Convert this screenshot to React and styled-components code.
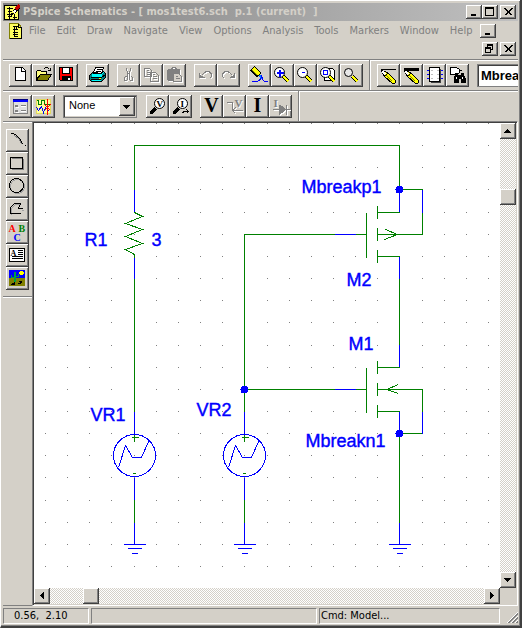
import React from "react";
import styled, { createGlobalStyle, css } from "styled-components";

const FACE = "#d4d0c8";
const GREEN = "#008000";
const BLUE = "#0000ff";
const UI_FONT = '"DejaVu Sans Condensed", "DejaVu Sans", sans-serif';

const GlobalStyle = createGlobalStyle`
  *, *::before, *::after { box-sizing: border-box; }
  body { margin: 0; background: ${FACE}; font: 11px/14px ${UI_FONT}; color: #000; }
  button, input, select { font: inherit; color: inherit; margin: 0; border-radius: 0; }
  svg { display: block; flex: none; }
`;

const raised = css`
  border: 0;
  padding: 0;
  background: ${FACE};
  box-shadow: inset -1px -1px #404040, inset 1px 1px #fff, inset -2px -2px #808080;
`;

const Window = styled.div`
  display: flex;
  flex-direction: column;
  min-height: 100vh;
  padding: 3px 2px 0 2px;
  overflow: hidden;
  background: ${FACE};
  border-left: 1px solid #fff;
  border-right: 2px solid #404040;
  border-bottom: 2px solid #404040;
  box-shadow: inset 0 1px #fff, inset -1px -1px #808080;
`;

const TitleBar = styled.header`
  display: flex;
  align-items: center;
  height: 18px;
  padding: 0 2px 0 1px;
  background: linear-gradient(90deg, #808080, #c0c0c0);
`;

const Title = styled.h1`
  flex: 1;
  min-width: 0;
  margin: 0 0 0 3px;
  overflow: hidden;
  white-space: pre;
  font: bold 11px/16px ${UI_FONT};
  color: ${FACE};
`;

const CaptionButton = styled.button`
  ${raised}
  display: block;
  width: 16px;
  height: 14px;
  margin-left: ${(p) => (p.$apart ? "2px" : "0")};
`;

const MenuBar = styled.nav`
  display: flex;
  align-items: center;
  gap: 1px;
  height: 19px;
  padding-left: 6px;
`;

const MenuItem = styled.button`
  border: 0;
  padding: 0 5px;
  background: none;
  color: #808080;
  line-height: 16px;
`;

const ChildControls = styled.div`
  display: flex;
  justify-content: flex-end;
  height: 19px;
  padding: 2px 2px 0;
`;

const Toolbar = styled.div`
  display: flex;
  overflow: hidden;
  border-top: 1px solid #808080;
  box-shadow: inset 0 1px #fff;
  padding: 4px 0 3px 6px;
  gap: 8px;
`;

const ButtonGroup = styled.div`
  display: flex;
  flex: none;
`;

const Divider = styled.div`
  flex: none;
  width: 2px;
  margin: -4px -2px -3px -2px;
  border-left: 1px solid #808080;
  background: #fff;
`;

const ToolButton = styled.button`
  ${raised}
  flex: none;
  display: flex;
  justify-content: center;
  width: 23px;
  height: 23px;
  font: bold 20px/21px "Liberation Serif", serif;
`;

const PartInput = styled.input`
  flex: none;
  width: 120px;
  height: 23px;
  padding: 0 3px;
  background: #fff;
  border: 1px solid #808080;
  box-shadow: inset 1px 1px #404040;
  && { font: bold 13px/18px "Liberation Sans", sans-serif; }
`;

const SelectBox = styled.div`
  position: relative;
  flex: none;
  width: 74px;
  height: 23px;
  margin-right: 1px;
`;

const Select = styled.select`
  appearance: none;
  width: 100%;
  height: 100%;
  padding: 0 18px 3px 5px;
  background: #fff;
  border: 1px solid #808080;
  outline: 0;
  box-shadow: inset 1px 1px #404040, inset -1px -1px ${FACE};
  && { font: 11px/14px "Liberation Sans", sans-serif; }
`;

const SelectArrow = styled.span`
  ${raised}
  position: absolute;
  top: 2px;
  right: 2px;
  bottom: 2px;
  width: 16px;
  display: flex;
  align-items: center;
  pointer-events: none;
`;

const Workspace = styled.main`
  flex: 1;
  display: flex;
  min-height: 0;
`;

const SidePanel = styled.aside`
  flex: none;
  width: 29px;
  border-top: 1px solid #808080;
  border-bottom: 1px solid #808080;
  box-shadow: inset 0 1px #fff;
`;

const Palette = styled.div`
  display: flex;
  flex-direction: column;
  padding: 7px 3px 6px;
  border-bottom: 1px solid #808080;
  box-shadow: 0 1px #fff;
`;

const Document = styled.section`
  flex: 1;
  min-width: 0;
  display: grid;
  grid-template-columns: minmax(0, 1fr) 16px;
  grid-template-rows: minmax(0, 1fr) 16px;
  padding: 1px;
  border-style: solid;
  border-width: 1px;
  border-color: #808080 #fff #fff #808080;
  box-shadow: inset 1px 1px #404040;
`;

const Sheet = styled.div`
  overflow: hidden;
  background: #fff;
`;

const ScrollTrack = styled.div`
  display: flex;
  flex-direction: ${(p) => (p.$vertical ? "column" : "row")};
  background: repeating-conic-gradient(#fff 0 25%, ${FACE} 0 50%) 0 0 / 2px 2px;
`;

const ScrollButton = styled.button`
  ${raised}
  flex: none;
  width: 16px;
  height: 16px;
`;

const ScrollRun = styled.div`
  flex: 1;
  padding: ${(p) => (p.$vertical ? "50px 0 0" : "0 0 0 33px")};
`;

const ScrollThumb = styled.div`
  ${raised}
  width: 16px;
  height: 16px;
`;

const StatusBar = styled.footer`
  display: flex;
  gap: 2px;
  padding: 2px 0;
`;

const StatusPane = styled.div`
  flex: ${(p) => (p.$width ? `0 0 ${p.$width}px` : "1")};
  height: 16px;
  padding-left: ${(p) => (p.$indent ? "10px" : "1px")};
  border: 1px solid;
  border-color: #808080 #fff #fff #808080;
  white-space: pre;
`;

const Grip = styled.div`
  flex: none;
  display: flex;
  justify-content: flex-end;
  align-items: flex-end;
  width: 16px;
`;

/* Integer coordinates fall on pixel centres. */
function Icon({ w = 23, h = 23, children }) {
  return (
    <svg width={w} height={h} viewBox={`-0.5 -0.5 ${w} ${h}`} fill="none" stroke="#000" shapeRendering="crispEdges" aria-hidden="true">
      {children}
    </svg>
  );
}

function Engraved({ children }) {
  return (
    <Icon>
      <g transform="translate(1 1)" color="#fff" stroke="#fff">{children}</g>
      <g color="#808080" stroke="#808080">{children}</g>
    </Icon>
  );
}

function Glyph({ x, y, size, color = "currentColor", children }) {
  return (
    <text x={x} y={y} fontSize={size} fill={color} stroke="none" fontFamily="Liberation Serif, serif" fontWeight="bold">
      {children}
    </text>
  );
}

function Arrow({ dir }) {
  const d = {
    up: "M7 6h1M6 7h3M5 8h5M4 9h7",
    down: "M4 6h7M5 7h5M6 8h3M7 9h1",
    left: "M6 7L10 3V11Z",
    right: "M10 7L6 3V11Z",
  }[dir];
  const solid = dir === "left" || dir === "right";
  return (
    <svg width={16} height={16} viewBox="0 -0.5 16 16" shapeRendering="crispEdges" aria-hidden="true">
      <path d={d} fill={solid ? "#000" : "none"} stroke={solid ? "none" : "#000"} />
    </svg>
  );
}

const Minimize = () => <Icon w={16} h={14}><path d="M4 9H9M4 10H9" /></Icon>;
const Maximize = () => <Icon w={16} h={14}><path d="M3 2H11V10H3ZM3 3H11" /></Icon>;
const Restore = () => <Icon w={16} h={14}><path d="M5 5V2H10V7H8M5 3H10M3 5H8V10H3ZM3 6H8" /></Icon>;
const Close = () => <Icon w={16} h={14}><path d="M4 3L11 10M5 3L12 10M11 3L4 10M12 3L5 10" /></Icon>;

const AppIcon = () => (
  <Icon w={16} h={16}>
    <path d="M0 1H14V15H0Z" fill="#ffff60" />
    <path d="M2 4H8M5 2V6M3 7H7M5 7V14M2 10H8M3 12H7M10 9V14M8 13H12" />
    <path d="M9 8L14 3" strokeWidth="4" />
    <path d="M9 8L11 6" stroke="#fff" strokeWidth="2" />
    <path d="M11 5L15 1" stroke="#c00000" strokeWidth="3" />
    <path d="M9 9H7V11" />
  </Icon>
);

const DocIcon = () => (
  <Icon w={14} h={16}>
    <path d="M0 0H9L12 4V15H0Z" fill="#ffff60" stroke="#808000" />
    <path d="M9 0V4H12V15H0" />
    <path d="M3 3H8M5 2V8M7 2V5M3 6H8M5 8V13M3 9H8M3 11H8M5 13H8" />
  </Icon>
);

const NewIcon = () => <Icon><path d="M6 3H13L16 6V16H6Z" fill="#fff" /><path d="M12 3V7H16" /></Icon>;
const OpenIcon = () => (
  <Icon>
    <path d="M4 15V7L5 6H8L9 7H14V10H8L4 15" fill="#ffff80" />
    <path d="M4 16L8 10H19L15 16Z" fill="#808000" />
    <path d="M11 5L12 4L13 3H15L17 5M18 3V6H15" />
  </Icon>
);
const SaveIcon = () => (
  <Icon>
    <path d="M4 3H17V16H5L4 15Z" fill="#f00" />
    <path d="M7 3H14V9H7Z" fill="#fff" />
    <path d="M7 12H15V16H7Z" fill="#000" />
    <path d="M13 13V15" stroke="#fff" strokeWidth="2" />
  </Icon>
);
const PrintIcon = () => (
  <Icon>
    <path d="M7 8L9 3H17L15 9Z" fill="#fff" />
    <path d="M10 5H15M9 7H14" />
    <path d="M3 11L6 8H8L7 9H15L17 7L19 9V13L15 17H5L3 15Z" fill="#008080" />
    <path d="M5 10H15L17 8M5 12H15M5 16H14M5 11H15" stroke="#00ffff" />
    <path d="M4 13H15L19 10M4 15H14" />
    <path d="M12 14H14" stroke="#ff0" />
  </Icon>
);
const CutIcon = () => (
  <Engraved>
    <path d="M9 3V6L13 12M13 3V6L9 12M10 8V9M12 8V9M9 12H8L7 13V16H9L10 15V11M13 12H14L15 13V16H13L12 15V11" />
  </Engraved>
);
const CopyIcon = () => (
  <Engraved>
    <path d="M4 4H9L11 6V12H4ZM6 6H8M6 8H9M6 10H9M10 8H15L18 11V17H10ZM12 10H14M12 12H16M12 14H16" />
  </Engraved>
);
const PasteIcon = () => (
  <Engraved>
    <path d="M5 5H16V10H10V16H5L4 15V6Z" fill="currentColor" />
    <path d="M8 5L9 3H12L13 5" />
    <path d="M10 9H15L18 12V17H10Z" fill={FACE} />
    <path d="M12 12H14M12 14H16" />
  </Engraved>
);
const UndoIcon = () => <Engraved><path d="M5 8V13H10M6 12V10M7 12V11M8 12V11M7 11L10 8L12 7H14L16 8L17 10V12L15 14" /></Engraved>;
const RedoIcon = () => <Engraved><path d="M17 8V13H12M16 12V10M15 12V11M14 12V11M15 11L12 8L10 7H8L6 8L5 10V12L7 14" /></Engraved>;

const PaintIcon = () => (
  <Icon>
    <path d="M4 4L11 11" strokeWidth="6" />
    <path d="M5 4L11 10" stroke="#ff0" strokeWidth="4" />
    <path d="M4 6L9 11" stroke="#808000" />
    <path d="M11 11H13L14 14H12Z" fill="#0080ff" stroke="#0080ff" />
    <path d="M3 17H9L12 14M10 17L12 15M13 11L14 15L16 17H19" stroke="#00f" />
  </Icon>
);

function Magnifier({ sign, page, small }) {
  return (
    <Icon>
      {page && <path d="M7 4H15L17 6V16H7Z" fill="#fff" />}
      <path d="M12 12L17 17" strokeWidth="4" />
      <path d="M12 12L17 17" stroke="#ff0" strokeWidth="2" />
      <circle cx="8" cy="8" r={small ? 4 : 5} fill={small ? "#e8e8e8" : "#fff"} shapeRendering="auto" />
      {sign === "+" && <path d="M5 8H12M8 5V12M5 9H12M9 5V12" stroke="#00f" />}
      {sign === "-" && <path d="M7 8H10" stroke="#00f" />}
      {page && <path d="M6 6H10V10H6Z" stroke="#00f" />}
    </Icon>
  );
}

function DrawTool({ thick }) {
  return (
    <Icon>
      <path d={thick ? "M3 4H18M3 5H18M3 6H18" : "M3 5H18"} />
      <path d="M4 6L10 8L18 16V18L17 19H15L7 12Z" fill="#ffff00" />
      <path d="M5 7L8 10" stroke="#fff" strokeWidth="2" />
      <path d="M9 11L15 17" stroke="#808000" />
      <path d="M10 9L7 12" />
    </Icon>
  );
}

const PartIcon = () => (
  <Icon>
    <path d="M7 18H17V4" stroke="#404040" />
    <path d="M6 3H16V17H6Z" fill="#fff" />
    <path d="M3 6H5M3 10H5M3 14H5M17 6H19M17 10H19M17 14H19" stroke="#00f" />
    <path d="M7 6H9M7 10H9M7 14H9M13 6H15M13 10H15M13 14H15" stroke="#c0c0c0" />
  </Icon>
);
const FindPartIcon = () => (
  <Icon>
    <path d="M4 3H10L13 5V8L10 10H4Z" fill="#fff" />
    <path d="M3 5H4M3 8H4M13 6H15" />
    <path d="M9 9H11V11H15V9H17V11L19 15V18H15V14H12V18H8V14Z" fill="#000" />
    <path d="M10 12V14M16 12V14" stroke="#fff" />
  </Icon>
);
const SetupIcon = () => (
  <Icon>
    <path d="M4 4H18V18H4Z" fill="#e0e0e0" stroke="#808080" />
    <path d="M3 4H18" stroke="#000080" />
    <path d="M3 5H18M3 6H18" stroke="#00f" />
    <path d="M6 10H8V11H6ZM6 15H8V16H6ZM11 10H16M11 15H16" stroke="#808080" />
    <path d="M6 12H9M6 17H9M11 11H16M11 16H16" stroke="#fff" />
  </Icon>
);
const SimulateIcon = () => (
  <Icon>
    <path d="M4 4H18V18H4Z" fill="#ffffa0" stroke="#e0d860" />
    <path d="M4 5H6V9H9V5H12V9H17" stroke={GREEN} />
    <path d="M4 12L6 15L9 11L11 17L13 12L17 16" stroke="#00f" />
    <path d="M15 3V19M12 9L18 15M18 9L12 15" stroke="#f00" />
  </Icon>
);

function MarkerIcon({ letter }) {
  return (
    <Icon>
      <path d="M4 18L9 13" strokeWidth="3" />
      <path d="M3 19L11 11" />
      <circle cx="13" cy="8" r="5" fill="#fff" shapeRendering="auto" />
      <Glyph x={letter === "V" ? 10 : 11} y={11} size={9}>{letter}</Glyph>
      {letter === "I" && <path d="M13 18L14 16H18M17 14L19 16L17 18" />}
    </Icon>
  );
}

const VoltageAtNet = () => (
  <Engraved>
    <path d="M3 7H9V15H19M12 12L9 15L12 18" />
    <Glyph x={11} y={11} size={11}>V</Glyph>
  </Engraved>
);
const CurrentAtPin = () => (
  <Engraved>
    <Glyph x={4} y={11} size={11}>I</Glyph>
    <path d="M3 14H20M10 9V19M17 9V19" />
    <path d="M11 10L16 14L11 18Z" fill="currentColor" />
  </Engraved>
);

const ArcIcon = () => <Icon><path d="M4 4H7L10 6L13 9L15 12L16 15M18 16H19" /><path d="M8 6L12 9L14 12L15 15" stroke="#808080" /></Icon>;
const BoxIcon = () => <Icon><path d="M5 17H17V6M5 6H15" stroke="#808080" /><path d="M4 5H16V16H4Z" /></Icon>;
const CircleIcon = () => <Icon><circle cx="11" cy="11" r="7" stroke="#a0a0a0" /><circle cx="10" cy="10" r="7" /></Icon>;
const PolyIcon = () => <Icon><path d="M5 16V10L9 6H14M15 12H17" stroke="#a0a0a0" /><path d="M4 15V9L8 5H14L12 10H16M4 15H14" /></Icon>;
const TextIcon = () => (
  <Icon>
    <Glyph x={2} y={10} size={10} color="#f00">A</Glyph>
    <Glyph x={12} y={10} size={10} color={GREEN}>B</Glyph>
    <Glyph x={7} y={19} size={10} color="#00f">C</Glyph>
  </Icon>
);
const TextBoxIcon = () => (
  <Icon>
    <path d="M3 4H18V17H3Z" fill="#fff" />
    <Glyph x={4} y={11} size={8}>A</Glyph>
    <path d="M11 6H16M11 8H16M11 10H16M5 12H16M5 14H16" />
  </Icon>
);
const PictureIcon = () => (
  <Icon>
    <path d="M3 3H18V11H3Z" fill="#00f" stroke="#00f" />
    <path d="M3 11H18V18H3Z" fill="#808000" stroke="#808000" />
    <path d="M14 4H16V7H14ZM13 5H17V6H13Z" fill="#ff0" stroke="#ff0" />
    <path d="M8 4V14M9 4V14M5 7V10H8M12 6V9H9" stroke="#00a040" />
    <path d="M4 17H8M5 16H8M7 15H8M12 14H15M11 16H14L15 14" />
  </Icon>
);

const GRID_STEP = 22.15;
const gridLine = (start, count) => Array.from({ length: count }, (_, i) => Math.round(start + i * GRID_STEP));
const GRID_DOTS = gridLine(123, 21)
  .flatMap((y) => gridLine(45, 21).map((x) => `M${x - 0.5} ${y}h1`))
  .join("");

function Source({ x }) {
  return (
    <g transform={`translate(${x} 455)`}>
      <path d="M-3 -18H4M0 -21V-14M-2 18H1" stroke={GREEN} />
      <circle r="21" />
      <path d="M-16 12L-9 -10L-2 2H7L14 -14" />
      <path d="M0 -44V-22M0 22V44" />
      <path d="M0 44V67" stroke={GREEN} />
    </g>
  );
}

function Ground({ x }) {
  return <path transform={`translate(${x} 544)`} d="M0 -22V0M-11 0H11M-7 4H7M-3 9H3" />;
}

function Mosfet({ y, arrow }) {
  return (
    <g transform={`translate(377 ${y})`}>
      <path d="M-43 0H-22" />
      <path
        stroke={GREEN}
        d="M-22 0H-11M-11 -22V23M0 -29V-16M0 -7V6M0 15V28M0 -22H22M0 0H45M0 22H22"
      />
      <path stroke={GREEN} d={arrow === "out" ? "M8 -5L20 0L7 5" : "M21 -5L9 0L21 4"} />
    </g>
  );
}

const LABELS = [
  [84, 245, "R1"],
  [151, 245, "3"],
  [301, 192, "Mbreakp1"],
  [346, 285, "M2"],
  [348, 349, "M1"],
  [305, 446, "Mbreakn1"],
  [90, 420, "VR1"],
  [196, 415, "VR2"],
];

function Schematic() {
  return (
    <svg width="466" height="465" viewBox="33.5 122.5 466 465" fill="none" stroke={BLUE} shapeRendering="crispEdges" role="img" aria-label="Schematic">
      <path d={GRID_DOTS} stroke="#808080" />
      <path
        stroke={GREEN}
        d="M134 189V145H399V189H422M134 278V411M244 411V234H334M244 389H334M422 212V234M399 278V344M422 389V411M399 433H422M399 433V522"
      />
      <path d="M134 189V212M134 256V278M399 189V212M422 189V212M399 256V278M399 344V367M422 411V433M399 411V433" />
      <path stroke={GREEN} d="M134 212L142 216L125 223L142 229L125 236L142 243L125 249L134 254V257" />
      <Source x={134} />
      <Source x={244} />
      <Ground x={134} />
      <Ground x={244} />
      <Ground x={399} />
      <Mosfet y={234} arrow="out" />
      <Mosfet y={389} arrow="in" />
      <g fill={BLUE} stroke="none">
        <circle cx="399" cy="189" r="4" />
        <circle cx="244" cy="389" r="4" />
        <circle cx="399" cy="433" r="4" />
      </g>
      <g fill={BLUE} strokeWidth="0.4" fontFamily="Liberation Sans, sans-serif" fontSize="18">
        {LABELS.map(([x, y, text]) => (
          <text key={text} x={x} y={y}>{text}</text>
        ))}
      </g>
    </svg>
  );
}

const MENUS = ["File", "Edit", "Draw", "Navigate", "View", "Options", "Analysis", "Tools", "Markers", "Window", "Help"];

const FILE_TOOLS = [
  [["New", <NewIcon />], ["Open", <OpenIcon />], ["Save", <SaveIcon />]],
  [["Print", <PrintIcon />]],
  [["Cut", <CutIcon />, true], ["Copy", <CopyIcon />, true], ["Paste", <PasteIcon />, true]],
  [["Undo", <UndoIcon />, true], ["Redo", <RedoIcon />, true]],
  [
    ["Redraw", <PaintIcon />],
    ["Zoom in", <Magnifier sign="+" />],
    ["Zoom out", <Magnifier sign="-" />],
    ["Zoom area", <Magnifier page />],
    ["Zoom to fit", <Magnifier small />],
  ],
];
const DRAW_TOOLS = [
  ["Draw wire", <DrawTool />],
  ["Draw bus", <DrawTool thick />],
  ["Draw block", <PartIcon />],
  ["Get new part", <FindPartIcon />],
];
const SETUP_TOOLS = [["Setup analysis", <SetupIcon />], ["Simulate", <SimulateIcon />]];
const MARKER_TOOLS = [["Voltage marker", <MarkerIcon letter="V" />], ["Current marker", <MarkerIcon letter="I" />]];
const BIAS_TOOLS = [
  ["Show bias voltage", "V"],
  ["Voltage at net", <VoltageAtNet />, true],
  ["Show bias current", "I"],
  ["Current at pin", <CurrentAtPin />, true],
];
const SHAPE_TOOLS = [
  ["Arc", <ArcIcon />],
  ["Box", <BoxIcon />],
  ["Circle", <CircleIcon />],
  ["Polyline", <PolyIcon />],
  ["Text", <TextIcon />],
  ["Text box", <TextBoxIcon />],
  ["Picture", <PictureIcon />],
];

const renderTools = (tools) =>
  tools.map(([label, icon, disabled]) => (
    <ToolButton key={label} aria-label={label} disabled={disabled}>{icon}</ToolButton>
  ));

export default function App() {
  return (
    <Window>
      <GlobalStyle />
      <TitleBar>
        <AppIcon />
        <Title>{"PSpice Schematics - [ mos1test6.sch  p.1 (current)  ]"}</Title>
        <CaptionButton aria-label="Minimize"><Minimize /></CaptionButton>
        <CaptionButton aria-label="Maximize"><Maximize /></CaptionButton>
        <CaptionButton aria-label="Close" $apart><Close /></CaptionButton>
      </TitleBar>
      <MenuBar>
        <DocIcon />
        {MENUS.map((name) => <MenuItem key={name}>{name}</MenuItem>)}
        <CaptionButton aria-label="Minimize sheet" $apart><Minimize /></CaptionButton>
      </MenuBar>
      <ChildControls>
        <CaptionButton aria-label="Restore sheet"><Restore /></CaptionButton>
        <CaptionButton aria-label="Close sheet" $apart><Close /></CaptionButton>
      </ChildControls>
      <Toolbar>
        {FILE_TOOLS.map((group) => <ButtonGroup key={group[0][0]}>{renderTools(group)}</ButtonGroup>)}
        <Divider />
        <ButtonGroup>{renderTools(DRAW_TOOLS)}</ButtonGroup>
        <PartInput aria-label="Part name" defaultValue="Mbreakn1" />
      </Toolbar>
      <Toolbar>
        <ButtonGroup>{renderTools(SETUP_TOOLS)}</ButtonGroup>
        <SelectBox>
          <Select aria-label="Marker" defaultValue="None"><option>None</option></Select>
          <SelectArrow><Arrow dir="down" /></SelectArrow>
        </SelectBox>
        <ButtonGroup>{renderTools(MARKER_TOOLS)}</ButtonGroup>
        <ButtonGroup>{renderTools(BIAS_TOOLS)}</ButtonGroup>
        <Divider />
      </Toolbar>
      <Workspace>
        <SidePanel>
          <Palette>{renderTools(SHAPE_TOOLS)}</Palette>
        </SidePanel>
        <Document>
          <Sheet><Schematic /></Sheet>
          <ScrollTrack $vertical>
            <ScrollButton aria-label="Scroll up"><Arrow dir="up" /></ScrollButton>
            <ScrollRun $vertical><ScrollThumb /></ScrollRun>
            <ScrollButton aria-label="Scroll down"><Arrow dir="down" /></ScrollButton>
          </ScrollTrack>
          <ScrollTrack>
            <ScrollButton aria-label="Scroll left"><Arrow dir="left" /></ScrollButton>
            <ScrollRun><ScrollThumb /></ScrollRun>
            <ScrollButton aria-label="Scroll right"><Arrow dir="right" /></ScrollButton>
          </ScrollTrack>
        </Document>
      </Workspace>
      <StatusBar>
        <StatusPane $width={86} $indent>{"0.56,  2.10"}</StatusPane>
        <StatusPane />
        <StatusPane $width={181}>Cmd: Model...</StatusPane>
        <Grip>
          <Icon w={13} h={13}>
            <path d="M1 12L12 1M5 12L12 5M9 12L12 9" stroke="#fff" />
            <path d="M2 12L12 2M3 12L12 3M6 12L12 6M7 12L12 7M10 12L12 10M11 12L12 11" stroke="#808080" />
          </Icon>
        </Grip>
      </StatusBar>
    </Window>
  );
}
